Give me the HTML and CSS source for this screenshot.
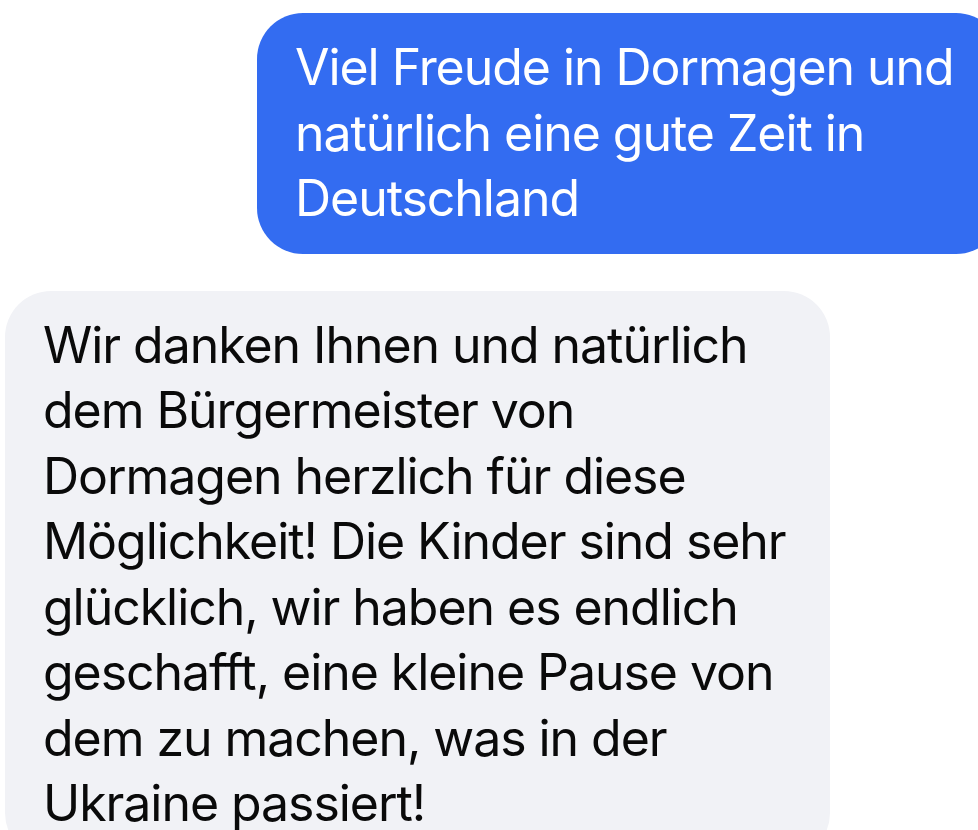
FILE: index.html
```html
<!DOCTYPE html>
<html lang="de">
<head>
    <meta charset="UTF-8">
    <meta name="viewport" content="width=device-width, initial-scale=1.0">
    <title>Chat</title>
    <link rel="stylesheet" href="styles.css">
</head>
<body>
    <div class="chat">
        <div class="bubble sent">
            Viel Freude in Dormagen und natürlich eine gute Zeit in Deutschland
        </div>

        <div class="bubble received">
            Wir danken Ihnen und natürlich dem Bürgermeister von Dormagen herzlich für diese Möglichkeit! Die Kinder sind sehr glücklich, wir haben es endlich geschafft, eine kleine Pause von dem zu machen, was in der Ukraine passiert!
        </div>
    </div>
</body>
</html>
```

FILE: styles.css
```css
html, body {
    margin: 0;
    padding: 0;
    height: 100%;
    overflow: hidden;
    background-color: #fff;
}

body {
    font-family: Inter, "Noto Sans", sans-serif;
}

.chat {
    display: flex;
    flex-direction: column;
    gap: 37px;
    padding-top: 13px;
}

.bubble {
    font-size: 50px;
    line-height: 65.5px;
    letter-spacing: -1.05px;
    padding: 22px 30px 22px 38px;
    border-radius: 46px;
    box-sizing: border-box;
}

.sent {
    align-self: flex-end;
    width: 745px;
    margin-right: -24px;
    background-color: #336cf1;
    color: #fff;
}

.received {
    align-self: flex-start;
    width: 825px;
    margin-left: 5px;
    background-color: #f1f2f6;
    color: #0a0a0a;
}
```
